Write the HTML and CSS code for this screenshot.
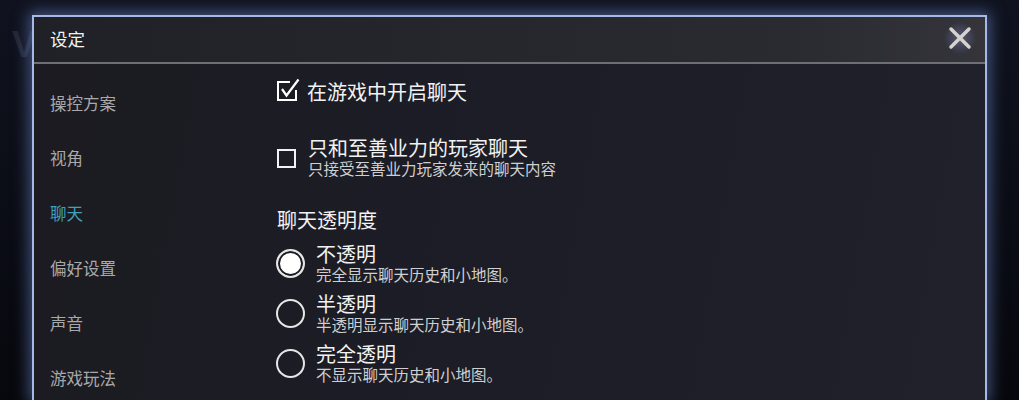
FILE: index.html
```html
<!DOCTYPE html>
<html lang="zh-CN">
<head>
    <meta charset="UTF-8">
    <title>设定</title>
    <link rel="stylesheet" href="styles.css">
</head>
<body>
    <div class="backdrop-logo">V</div>

    <div class="panel">
        <div class="panel-header">
            <span class="panel-title">设定</span>
            <button class="close-btn" aria-label="关闭">
                <svg width="26" height="26" viewBox="0 0 26 26">
                    <path d="M4 4 L22 22 M22 4 L4 22" stroke="#d6d4cc" stroke-width="3.5" stroke-linecap="round"/>
                </svg>
            </button>
        </div>

        <div class="panel-body">
            <ul class="side-menu">
                <li>操控方案</li>
                <li>视角</li>
                <li class="active">聊天</li>
                <li>偏好设置</li>
                <li>声音</li>
                <li>游戏玩法</li>
            </ul>

            <div class="settings">
                <div class="option first">
                    <span class="check">
                        <svg width="24" height="24" viewBox="0 0 24 24">
                            <path d="M14 4 H2 V22 H20 V12" fill="none" stroke="#fff" stroke-width="2"/>
                            <path d="M6 11 L10.5 17.5 L22.5 1.5" fill="none" stroke="#fff" stroke-width="2.2"/>
                        </svg>
                    </span>
                    <div class="option-text">
                        <div class="option-title">在游戏中开启聊天</div>
                    </div>
                </div>

                <div class="option second">
                    <span class="box"></span>
                    <div class="option-text">
                        <div class="option-title">只和至善业力的玩家聊天</div>
                        <div class="option-desc">只接受至善业力玩家发来的聊天内容</div>
                    </div>
                </div>

                <div class="section-title">聊天透明度</div>

                <div class="radio-list">
                    <div class="radio-row">
                        <span class="radio selected"></span>
                        <div class="option-text">
                            <div class="option-title">不透明</div>
                            <div class="option-desc">完全显示聊天历史和小地图。</div>
                        </div>
                    </div>
                    <div class="radio-row">
                        <span class="radio"></span>
                        <div class="option-text">
                            <div class="option-title">半透明</div>
                            <div class="option-desc">半透明显示聊天历史和小地图。</div>
                        </div>
                    </div>
                    <div class="radio-row">
                        <span class="radio"></span>
                        <div class="option-text">
                            <div class="option-title">完全透明</div>
                            <div class="option-desc">不显示聊天历史和小地图。</div>
                        </div>
                    </div>
                </div>
            </div>
        </div>
    </div>
</body>
</html>
```

FILE: styles.css
```css
* {
    box-sizing: border-box;
}

html, body {
    height: 100%;
}

body {
    margin: 0;
    overflow: hidden;
    font-family: "Noto Sans CJK SC", "Noto Sans", sans-serif;
    background: linear-gradient(180deg, #10131f 0%, #07080d 100%);
    padding: 15px 32px 0 32px;
    position: relative;
}

.backdrop-logo {
    position: absolute;
    left: 12px;
    top: 24px;
    font-family: "Liberation Sans", sans-serif;
    font-size: 36px;
    font-weight: bold;
    color: #222735;
}

.panel {
    position: relative;
    width: 955px;
    height: 385px;
    border: 2px solid #a6b9e6;
    border-bottom: none;
    box-shadow: 0 0 14px 3px rgba(110, 140, 210, 0.55);
    background: linear-gradient(100deg, #1b1b21 0%, #1c1d27 55%, #20212a 100%);
}

.panel-header {
    height: 47px;
    display: flex;
    align-items: center;
    justify-content: space-between;
    padding: 0 9px 0 16px;
    background: linear-gradient(90deg, #202126 0%, #25262c 40%, #2a2b30 80%, #34343a 100%);
    border-bottom: 2px solid #6e6f74;
}

.panel-title {
    color: #f2f2f2;
    font-size: 17.5px;
    margin-top: -2px;
}

.close-btn {
    border: none;
    padding: 0;
    width: 32px;
    height: 32px;
    display: flex;
    align-items: center;
    justify-content: center;
    margin-top: -4px;
    background: radial-gradient(circle, rgba(150, 160, 230, 0.35) 0%, rgba(120, 130, 210, 0.15) 50%, rgba(0, 0, 0, 0) 72%);
}

.panel-body {
    display: flex;
}

.side-menu {
    list-style: none;
    margin: 0;
    padding: 12px 0 0 16px;
    width: 242px;
}

.side-menu li {
    height: 55px;
    line-height: 55px;
    font-size: 16.5px;
    color: #a9a9ab;
}

.side-menu li.active {
    color: #3fa2bd;
}

.settings {
    padding-top: 16px;
    color: #f2f2f2;
}

.option {
    display: flex;
    align-items: center;
}

.option.second {
    margin-top: 33px;
}

.check {
    width: 24px;
    height: 24px;
    margin: -4px 7px 0 0;
}

.check svg {
    display: block;
}

.box {
    width: 19px;
    height: 19px;
    border: 2px solid #f2f2f2;
    margin: 2px 12px 0 1px;
}

.option-title {
    font-size: 20px;
    line-height: 23px;
}

.option-desc {
    font-size: 15.5px;
    line-height: 19px;
    color: #cfcfcf;
}

.section-title {
    margin-top: 30px;
    font-size: 20px;
    line-height: 24px;
    margin-left: 1px;
}

.radio-list {
    margin-top: 10px;
    display: flex;
    flex-direction: column;
    gap: 8px;
}

.radio-row {
    display: flex;
    align-items: center;
    height: 42px;
}

.radio {
    width: 29px;
    height: 29px;
    border-radius: 50%;
    border: 2px solid #e6e6e6;
    margin-right: 11px;
}

.radio.selected {
    background: #ffffff;
    box-shadow: inset 0 0 0 2px #1c1c22;
}
```
